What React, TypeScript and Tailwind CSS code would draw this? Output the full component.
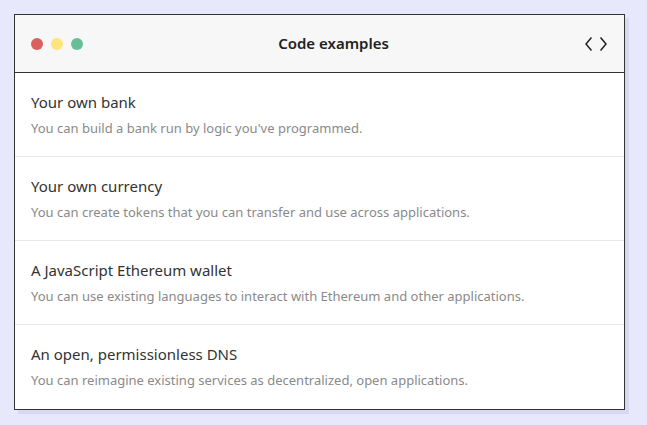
import React from "react";

// ── Code examples card ───────────────────────────────────────────────────────

type Example = { title: string; description: string };

const EXAMPLES: Example[] = [
  { title: "Your own bank", description: "You can build a bank run by logic you've programmed." },
  { title: "Your own currency", description: "You can create tokens that you can transfer and use across applications." },
  { title: "A JavaScript Ethereum wallet", description: "You can use existing languages to interact with Ethereum and other applications." },
  { title: "An open, permissionless DNS", description: "You can reimagine existing services as decentralized, open applications." },
];

function CodeIcon() {
  return (
    <svg width="24" height="16" viewBox="0 0 24 16" fill="none" stroke="#222" strokeWidth="1.5" strokeLinecap="square">
      <polyline points="7 2 2 8 7 14" />
      <polyline points="17 2 22 8 17 14" />
    </svg>
  );
}

function ExampleRow({ example }: { example: Example }) {
  return (
    <div className="h-[84px] px-4 pt-[19px] border-b border-[#e6e6e6] last:border-0">
      <p className="text-[15px] leading-[20px] text-[#333]">{example.title}</p>
      <p className="mt-[7px] text-[13px] leading-[18px] text-[#8a8a8a]">{example.description}</p>
    </div>
  );
}

export default function App() {
  return (
    <div
      className="min-h-screen w-full bg-[#e8e8fc] pt-[14px] pl-[14px]"
      style={{ fontFamily: '"Noto Sans", "Open Sans", sans-serif' }}
    >
      <div className="w-[611px] bg-white border border-[#333] shadow-[4px_4px_0_#d8d8f6]">
        {/* Title bar */}
        <div className="h-[58px] bg-[#f7f7f7] border-b border-[#333] flex items-center px-4">
          <div className="flex gap-2">
            <span className="w-3 h-3 rounded-full bg-[#d9605f]" />
            <span className="w-3 h-3 rounded-full bg-[#fde47b]" />
            <span className="w-3 h-3 rounded-full bg-[#66bf97]" />
          </div>
          <h1 className="flex-1 text-center text-[15px] font-semibold text-[#222]">Code examples</h1>
          <CodeIcon />
        </div>

        {EXAMPLES.map((ex, i) => (
          <ExampleRow key={i} example={ex} />
        ))}
      </div>
    </div>
  );
}
